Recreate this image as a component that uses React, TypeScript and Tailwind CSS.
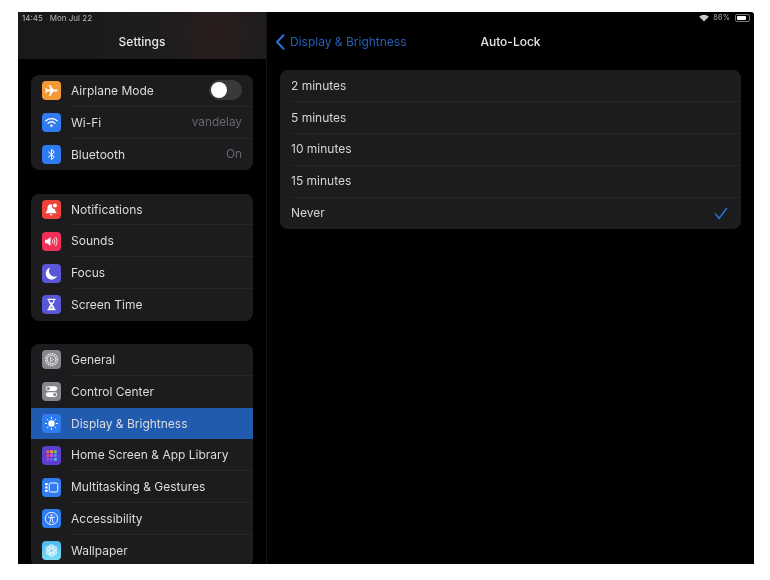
import type { ReactNode } from "react"

const Tile = ({ color, children }: { color: string; children: ReactNode }) => (
  <div className={`w-[19px] h-[19px] rounded-[4px] shrink-0 flex items-center justify-center ${color}`}>
    <svg width="19" height="19" viewBox="0 0 19 19">{children}</svg>
  </div>
)

const icons = {
  airplane: (
    <Tile color="bg-[#f19a36]">
      <path d="M15.6 9.5c0-.6-.7-1-1.5-1h-2.8L8.2 3.9H6.9l1.500 4.600H5.300L4.200 7.100h-.9l.6 2.400-.6 2.400h.9l1.100-1.400h3.100l-1.500 4.600h1.300l3.100-4.600h2.800c.8 0 1.500-.4 1.500-1z" fill="#fff" />
    </Tile>
  ),
  wifi: (
    <Tile color="bg-[#2f7cf0]">
      <g fill="none" stroke="#fff" strokeWidth="1.3" strokeLinecap="round">
        <path d="M3.800 7.800c3.300-2.800 8.100-2.800 11.400 0" />
        <path d="M6 10.200c2-1.700 5-1.700 7 0" />
      </g>
      <circle cx="9.5" cy="12.800" r="1.200" fill="#fff" />
    </Tile>
  ),
  bluetooth: (
    <Tile color="bg-[#2f7cf0]">
      <path d="M6.400 6.900l6 5-2.900 2.800V4.300l2.900 2.800-6 5" fill="none" stroke="#fff" strokeWidth="1" strokeLinejoin="round" strokeLinecap="round" />
    </Tile>
  ),
  bell: (
    <Tile color="bg-[#ef4238]">
      <path d="M9 4.200c-2.300 0-3.500 1.700-3.500 3.800 0 2.200-.6 3.300-1.700 4.400v.8h10.600v-.8c-.9-.9-1.400-1.800-1.500-3.300-2 .1-3.400-2.100-2.500-4.400-.4-.3-.9-.5-1.400-.5z" fill="#fff" />
      <circle cx="13" cy="5.500" r="1.900" fill="#fff" />
      <path d="M7.700 14.200h2.800a1.400 1.400 0 0 1-2.800 0z" fill="#fff" />
    </Tile>
  ),
  sounds: (
    <Tile color="bg-[#ef2f57]">
      <path d="M3 7.700h2.200L8.500 5v9L5.200 11.300H3z" fill="#fff" />
      <g fill="none" stroke="#fff" strokeWidth="0.9" strokeLinecap="round">
        <path d="M10.300 8c.6.900.6 2.100 0 3" />
        <path d="M12 6.700c1.100 1.700 1.100 4 0 5.600" />
        <path d="M13.800 5.300c1.700 2.500 1.700 5.900 0 8.400" />
      </g>
    </Tile>
  ),
  focus: (
    <Tile color="bg-[#5a56d8]">
      <path d="M8.100 3.800A6 6 0 1 0 15.200 12 5.600 5.600 0 0 1 8.100 3.800z" fill="#fff" />
    </Tile>
  ),
  screenTime: (
    <Tile color="bg-[#5a56d8]">
      <path d="M5.500 3.800h8v1.100h-.8c0 2.100-1.300 3.400-2.300 4.600 1 1.200 2.300 2.500 2.300 4.600h.8v1.100h-8v-1.100h.8c0-2.100 1.300-3.400 2.300-4.600-1-1.200-2.300-2.500-2.300-4.600h-.8z" fill="#fff" />
      <path d="M7.500 4.900h4c0 1.100-.5 1.900-1 2.500h-2c-.5-.6-1-1.400-1-2.500z" fill="#5a56d8" />
      <path d="M9.500 10.500l-1.900 3.100h3.800z" fill="#5a56d8" opacity="0.5" />
    </Tile>
  ),
  general: (
    <Tile color="bg-[#86868b]">
      <circle cx="9.5" cy="9.5" r="5.900" fill="none" stroke="#e8e8ea" strokeWidth="1.500" strokeDasharray="1.400 0.900" />
      <circle cx="9.5" cy="9.5" r="4.300" fill="#86868b" stroke="#fff" strokeWidth="0.8" />
      <path d="M8.400 7.200l3.200 2.300-3.200 2.300z" fill="none" stroke="#fff" strokeWidth="0.7" strokeLinejoin="round" />
    </Tile>
  ),
  control: (
    <Tile color="bg-[#86868b]">
      <rect x="3.800" y="4.200" width="11.400" height="4.800" rx="2.400" fill="#fff" />
      <circle cx="6.300" cy="6.600" r="1.600" fill="#86868b" />
      <rect x="3.800" y="10.200" width="11.400" height="4.800" rx="2.400" fill="#fff" />
      <circle cx="12.700" cy="12.600" r="1.600" fill="#86868b" />
    </Tile>
  ),
  display: (
    <Tile color="bg-[#2f7cf0]">
      <circle cx="9.5" cy="9.5" r="3.200" fill="#fff" />
      <g stroke="#fff" strokeWidth="0.9" strokeLinecap="round">
        <path d="M9.500 3.400v1.200M9.500 14.400v1.200M3.400 9.500h1.200M14.400 9.500h1.200M5.200 5.200l.8.800M13 13l.8.800M5.200 13.800l.8-.8M13 6l.8-.8" />
      </g>
    </Tile>
  ),
  home: (
    <Tile color="bg-[#5b3fd0]">
      {[
        ["#e8615a", "#ef9a3c", "#6bc46a"],
        ["#e0457f", "#d34fd0", "#4f8df0"],
        ["#a04fe0", "#7a5cf0", "#41c4e8"],
      ].map((line, r) =>
        line.map((c, i) => (
          <rect key={`${r}-${i}`} x={4.3 + i * 3.8} y={4.3 + r * 3.8} width="2.9" height="2.9" rx="0.7" fill={c} />
        ))
      )}
    </Tile>
  ),
  multitasking: (
    <Tile color="bg-[#2f7cf0]">
      <rect x="7.200" y="5" width="8.600" height="9" rx="1.500" fill="none" stroke="#fff" strokeWidth="1" />
      <g fill="#fff">
        <rect x="3.200" y="5" width="2.400" height="2.200" rx="0.500" />
        <rect x="3.200" y="8.400" width="2.400" height="2.200" rx="0.500" />
        <rect x="3.200" y="11.800" width="2.400" height="2.200" rx="0.500" />
      </g>
    </Tile>
  ),
  accessibility: (
    <Tile color="bg-[#2f7cf0]">
      <circle cx="9.5" cy="9.5" r="6.200" fill="none" stroke="#fff" strokeWidth="0.9" />
      <circle cx="9.5" cy="6.200" r="1" fill="#fff" />
      <path d="M6.300 7.900l2.400.6v2.300l-1 3M12.700 7.900l-2.400.6v2.300l1 3M8.700 8.500h1.600" fill="none" stroke="#fff" strokeWidth="0.9" strokeLinecap="round" />
    </Tile>
  ),
  wallpaper: (
    <Tile color="bg-[linear-gradient(#4cb7ee,#7adcf5)]">
      <g fill="#fff" fillOpacity="0.45" stroke="#fff" strokeWidth="0.5">
        <circle cx="9.5" cy="5.800" r="2.300" />
        <circle cx="9.5" cy="13.200" r="2.300" />
        <circle cx="6.300" cy="7.600" r="2.300" />
        <circle cx="12.700" cy="7.600" r="2.300" />
        <circle cx="6.300" cy="11.400" r="2.300" />
        <circle cx="12.700" cy="11.400" r="2.300" />
      </g>
    </Tile>
  ),
}

const Row = ({ icon, label, right, active, last }: { icon: ReactNode; label: string; right?: ReactNode; active?: boolean; last?: boolean }) => (
  <div className={`h-[31.8px] shrink-0 pl-[11px] flex items-center gap-[10px] ${active ? "bg-[#205bb0]" : ""}`}>
    {icon}
    <div className={`flex-1 h-full flex items-center justify-between pr-[11px] ${last || active ? "" : "border-b border-[#262628]"}`}>
      <span className="text-[12px] pt-[1px] text-[#dcdcde]">{label}</span>
      {right}
    </div>
  </div>
)

const Value = ({ children }: { children: string }) => <span className="text-[11.8px] pt-[1px] text-[#68686c]">{children}</span>

const Toggle = () => (
  <div className="w-[33px] h-[20px] rounded-full bg-[#39393c] p-[2px]">
    <div className="w-[16px] h-[16px] rounded-full bg-white"></div>
  </div>
)

const Option = ({ label, checked, last }: { label: string; checked?: boolean; last?: boolean }) => (
  <div className={`h-[31.8px] ml-[11px] pr-[11px] flex items-center justify-between ${last ? "" : "border-b border-[#262628]"}`}>
    <span className="text-[12px] text-[#d4d4d6]">{label}</span>
    {checked && (
      <svg width="14" height="13" viewBox="0 0 14 13" className="mr-[2px]">
        <path d="M1.500 7l3.500 4.500L12.500 1.500" fill="none" stroke="#2a6fd6" strokeWidth="1.500" strokeLinecap="round" strokeLinejoin="round" />
      </svg>
    )}
  </div>
)

export default function App() {
  return (
    <div className="w-[770px] h-[580px] bg-white pt-[12px] pl-[18px] font-['Inter',sans-serif]">
      <div className="w-[736px] h-[552px] bg-black flex overflow-hidden rounded-tr-[3px] blur-[0.35px]">
        {/* Sidebar */}
        <div className="w-[249px] shrink-0 border-r border-[#141416] overflow-hidden">
          <div className="h-[47px] bg-[radial-gradient(circle_at_80%_45%,#2a1e1c_0%,#1d1c1e_30%,#191919_100%)]">
            <div className="h-[12px] pl-[4px] flex items-center gap-[7px] text-[8px] text-[#b9b9bc]">
              <span>14:45</span>
              <span>Mon Jul 22</span>
            </div>
            <div className="h-[35px] flex items-center justify-center text-[12px] font-medium text-[#e6e6e8]">Settings</div>
          </div>

          <div className="w-[222px] ml-[13px] mt-[16px] rounded-[8px] bg-[#1c1c1e] overflow-hidden">
            <Row icon={icons.airplane} label="Airplane Mode" right={<Toggle />} />
            <Row icon={icons.wifi} label="Wi-Fi" right={<Value>vandelay</Value>} />
            <Row icon={icons.bluetooth} label="Bluetooth" right={<Value>On</Value>} last />
          </div>

          <div className="w-[222px] ml-[13px] mt-[23.3px] rounded-[8px] bg-[#1c1c1e] overflow-hidden">
            <Row icon={icons.bell} label="Notifications" />
            <Row icon={icons.sounds} label="Sounds" />
            <Row icon={icons.focus} label="Focus" />
            <Row icon={icons.screenTime} label="Screen Time" last />
          </div>

          <div className="w-[222px] ml-[13px] mt-[23.2px] rounded-[8px] bg-[#1c1c1e] overflow-hidden">
            <Row icon={icons.general} label="General" />
            <Row icon={icons.control} label="Control Center" last />
            <Row icon={icons.display} label="Display & Brightness" active />
            <Row icon={icons.home} label="Home Screen & App Library" />
            <Row icon={icons.multitasking} label="Multitasking & Gestures" />
            <Row icon={icons.accessibility} label="Accessibility" />
            <Row icon={icons.wallpaper} label="Wallpaper" />
          </div>
        </div>

        {/* Detail */}
        <div className="flex-1 min-w-0">
          <div className="h-[12px] pr-[4px] flex items-center justify-end gap-[3px] text-[7.5px] text-[#a9a9ac]">
            <svg width="10" height="8" viewBox="0 0 10 8" className="mr-[1px]">
              <path d="M5 7.600L.2 2.700a6.800 6.800 0 0 1 9.600 0z" fill="#c8c8ca" />
            </svg>
            <span>86%</span>
            <div className="ml-[2px] w-[15px] h-[8px] rounded-[2px] border border-[#77777a] p-[1px]">
              <div className="w-[86%] h-full bg-white rounded-[1px]"></div>
            </div>
          </div>
          <div className="h-[35px] grid grid-cols-[1fr_auto_1fr] items-center">
            <div className="flex items-center gap-[5px] pl-[8px]">
              <svg width="10" height="16" viewBox="0 0 10 16">
                <path d="M8.500 1.200L2 8l6.500 6.800" fill="none" stroke="#2a6fd6" strokeWidth="2" strokeLinecap="round" strokeLinejoin="round" />
              </svg>
              <span className="text-[12px] text-[#245fb8]">Display & Brightness</span>
            </div>
            <div className="text-[12px] font-medium text-[#e6e6e8]">Auto-Lock</div>
            <div></div>
          </div>
          <div className="mx-[13px] mt-[11px] pt-[0.4px] rounded-[8px] bg-[#1c1c1e] overflow-hidden">
            <Option label="2 minutes" />
            <Option label="5 minutes" />
            <Option label="10 minutes" />
            <Option label="15 minutes" />
            <Option label="Never" checked last />
          </div>
        </div>
      </div>
    </div>
  )
}
